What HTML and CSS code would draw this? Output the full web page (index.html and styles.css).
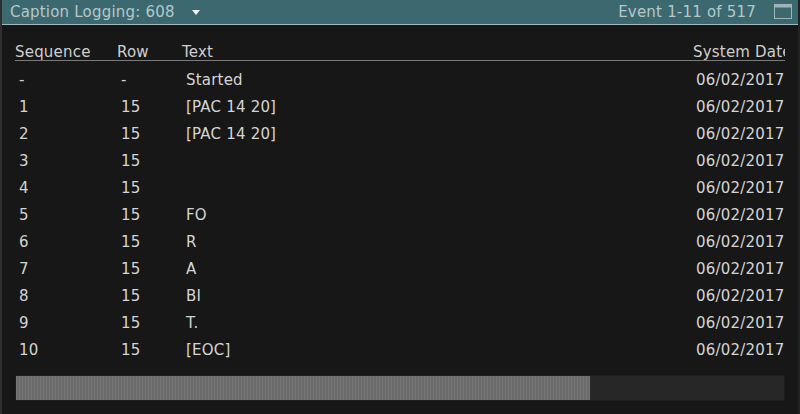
FILE: index.html
```html
<!DOCTYPE html>
<html>
<head>
<meta charset="utf-8">
<link rel="stylesheet" href="styles.css">
</head>
<body>
<div class="panel">
  <div class="titlebar">
    <div class="title">Caption Logging: 608 <span class="caret"></span></div>
    <div class="right">
      <span class="count">Event 1-11 of 517</span>
      <svg class="maxicon" width="18" height="16" viewBox="0 0 18 16">
        <rect x="0.5" y="0.5" width="17" height="14" fill="none" stroke="#9fb4b8" stroke-width="1"/>
        <rect x="0.5" y="0.5" width="17" height="3" fill="#9fb4b8"/>
      </svg>
    </div>
  </div>
  <div class="content">
    <div class="table">
      <div class="row head">
        <div class="c seq">Sequence</div>
        <div class="c rown">Row</div>
        <div class="c text">Text</div>
        <div class="c date">System Date</div>
      </div>
      <div class="rows">
        <div class="row"><div class="c seq">-</div><div class="c rown">-</div><div class="c text">Started</div><div class="c date">06/02/2017</div></div>
        <div class="row"><div class="c seq">1</div><div class="c rown">15</div><div class="c text">[PAC 14 20]</div><div class="c date">06/02/2017</div></div>
        <div class="row"><div class="c seq">2</div><div class="c rown">15</div><div class="c text">[PAC 14 20]</div><div class="c date">06/02/2017</div></div>
        <div class="row"><div class="c seq">3</div><div class="c rown">15</div><div class="c text"></div><div class="c date">06/02/2017</div></div>
        <div class="row"><div class="c seq">4</div><div class="c rown">15</div><div class="c text"></div><div class="c date">06/02/2017</div></div>
        <div class="row"><div class="c seq">5</div><div class="c rown">15</div><div class="c text">FO</div><div class="c date">06/02/2017</div></div>
        <div class="row"><div class="c seq">6</div><div class="c rown">15</div><div class="c text">R</div><div class="c date">06/02/2017</div></div>
        <div class="row"><div class="c seq">7</div><div class="c rown">15</div><div class="c text">A</div><div class="c date">06/02/2017</div></div>
        <div class="row"><div class="c seq">8</div><div class="c rown">15</div><div class="c text">BI</div><div class="c date">06/02/2017</div></div>
        <div class="row"><div class="c seq">9</div><div class="c rown">15</div><div class="c text">T.</div><div class="c date">06/02/2017</div></div>
        <div class="row"><div class="c seq">10</div><div class="c rown">15</div><div class="c text">[EOC]</div><div class="c date">06/02/2017</div></div>
      </div>
    </div>
    <div class="scrollbar"><div class="thumb"></div></div>
  </div>
</div>
</body>
</html>
```
FILE: styles.css
```css
html, body {
  margin: 0;
  padding: 0;
  background: #161616;
}
body {
  width: 800px;
  height: 414px;
  overflow: hidden;
  font-family: "DejaVu Sans", "Open Sans", sans-serif;
  color: #d4d4d4;
}
.panel {
  height: 414px;
  box-sizing: border-box;
  border-left: 2px solid #2e2e2e;
  border-right: 2px solid #222;
  background: #171717;
}
.titlebar {
  height: 24px;
  background: #3c6870;
  border-bottom: 1px solid #a9b8bb;
  display: flex;
  align-items: center;
  justify-content: space-between;
  padding: 0 6px 0 8px;
  color: #b6c7ca;
  font-size: 15px;
}
.title {
  display: flex;
  align-items: center;
  letter-spacing: 0.2px;
}
.caret {
  display: inline-block;
  width: 0;
  height: 0;
  border-left: 4px solid transparent;
  border-right: 4px solid transparent;
  border-top: 5px solid #eef3f4;
  margin-left: 17px;
  margin-top: 1px;
}
.right {
  display: flex;
  align-items: center;
  gap: 18px;
}
.count {
  letter-spacing: 0.2px;
}
.maxicon {
  display: block;
}
.content {
  padding: 16px 0 0 13px;
}
.table {
  width: 770px;
  overflow: hidden;
  font-size: 15px;
  letter-spacing: 0.2px;
}
.row {
  display: flex;
  height: 27px;
  align-items: center;
  white-space: nowrap;
}
.row.head {
  height: 17px;
  padding-top: 2px;
  align-items: flex-start;
  border-bottom: 1px solid #7a7a7a;
  color: #cfcfcf;
  line-height: 18px;
}
.rows {
  padding-top: 5px;
}
.c {
  flex: none;
}
.seq { width: 102px; }
.rown { width: 65px; }
.text { width: 511px; }
.date { width: 110px; }
.rows .c {
  padding-left: 4px;
  box-sizing: border-box;
}
.rows .date {
  padding-left: 3px;
}
.scrollbar {
  margin-top: 12px;
  width: 770px;
  height: 26px;
  background: #272727;
  border: 1px solid #1e1e1e;
  box-sizing: border-box;
}
.thumb {
  width: 574px;
  height: 100%;
  background: repeating-linear-gradient(90deg, #747474 0 1px, #6c6c6c 1px 3px);
}
```
